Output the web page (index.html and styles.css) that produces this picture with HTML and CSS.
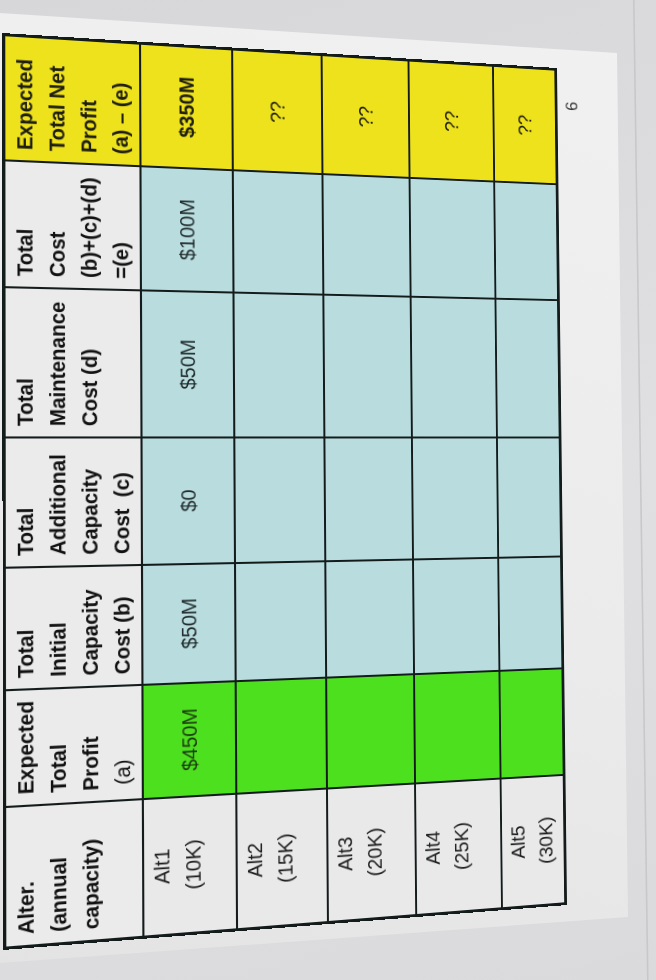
FILE: index.html
```html
<!DOCTYPE html>
<html lang="en">
<head>
<meta charset="utf-8">
<title>Capacity alternatives</title>
<link rel="stylesheet" href="styles.css">
</head>
<body>
<main class="page">
  <div class="sheet-edge"></div>
  <div class="paper"></div>
  <section class="doc">
    <div class="grid">
      <div class="cell head">Alter.<br>(annual<br>capacity)</div>
      <div class="cell head">Expected<br>Total<br>Profit<br><span class="indent">(a)</span></div>
      <div class="cell head">Total<br>Initial<br>Capacity<br>Cost (b)</div>
      <div class="cell head">Total<br>Additional<br>Capacity<br>Cost&nbsp; (c)</div>
      <div class="cell head">Total<br>Maintenance<br>Cost (d)</div>
      <div class="cell head">Total<br>Cost<br>(b)+(c)+(d)<br>=(e)</div>
      <div class="cell head net">Expected<br>Total Net<br>Profit<br>(a) – (e)</div>

      <div class="cell alt">Alt1<br>(10K)</div>
      <div class="cell val profit">$450M</div>
      <div class="cell val cost">$50M</div>
      <div class="cell val cost">$0</div>
      <div class="cell val cost">$50M</div>
      <div class="cell val cost">$100M</div>
      <div class="cell val net strong">$350M</div>

      <div class="cell alt">Alt2<br>(15K)</div>
      <div class="cell val profit"></div>
      <div class="cell val cost"></div>
      <div class="cell val cost"></div>
      <div class="cell val cost"></div>
      <div class="cell val cost"></div>
      <div class="cell val net">??</div>

      <div class="cell alt">Alt3<br>(20K)</div>
      <div class="cell val profit"></div>
      <div class="cell val cost"></div>
      <div class="cell val cost"></div>
      <div class="cell val cost"></div>
      <div class="cell val cost"></div>
      <div class="cell val net">??</div>

      <div class="cell alt">Alt4<br>(25K)</div>
      <div class="cell val profit"></div>
      <div class="cell val cost"></div>
      <div class="cell val cost"></div>
      <div class="cell val cost"></div>
      <div class="cell val cost"></div>
      <div class="cell val net">??</div>

      <div class="cell alt">Alt5<br>(30K)</div>
      <div class="cell val profit"></div>
      <div class="cell val cost"></div>
      <div class="cell val cost"></div>
      <div class="cell val cost"></div>
      <div class="cell val cost"></div>
      <div class="cell val net">??</div>
    </div>
    <div class="pageno">6</div>
  </section>
</main>
</body>
</html>
```

FILE: styles.css
```css
html, body {
  margin: 0;
  padding: 0;
  overflow: hidden;
  background: #dcdcde;
}

body {
  font-family: "Liberation Sans", Arial, sans-serif;
}

.page {
  width: 656px;
  height: 980px;
  display: grid;
  grid-template-columns: 656px;
  grid-template-rows: 980px;
  overflow: hidden;
  background: linear-gradient(165deg, #d7d7d9 0%, #e0e0e2 55%, #dadadc 100%);
}

.page > * {
  grid-area: 1 / 1;
}

.sheet-edge {
  clip-path: polygon(633px 0, 634.6px 0, 648.6px 980px, 647px 980px);
  background: #c8c8cb;
}

.paper {
  clip-path: polygon(0 13px, 617px 53px, 628px 917px, 0 963px);
  background: linear-gradient(200deg, #f1f1f2 0%, #ebebec 55%, #e3e3e4 100%);
}

.doc {
  width: 880px;
  justify-self: start;
  align-self: start;
  transform-origin: 0 0;
  transform: matrix3d(-0.0010956, -1.041373, 0, 0.0000204,
                      1.104679, 0.075321, 0, 0.00017202,
                      0, 0, 1, 0,
                      3, 950, 0, 1);
}

.grid {
  display: grid;
  grid-template-columns: 131px 109px 115px 123px 143px 121px 120px;
  grid-template-rows: 126px 88px 88px 88px 88px 66px;
  gap: 2px;
  border: 3px solid #131b1b;
  background: #131b1b;
}

.cell {
  font-size: 20px;
  line-height: 30px;
  color: #1a1a1a;
  white-space: nowrap;
}

.head {
  font-weight: bold;
  padding: 3px 6px 0 10px;
  background: #ebebeb;
  color: #111;
}

.indent {
  margin-left: 4px;
  font-weight: normal;
}

.alt {
  background: #e9e9ea;
  text-align: center;
  padding-top: 2px;
  color: #1e1e1e;
}

.val {
  display: flex;
  align-items: center;
  justify-content: center;
}

.profit {
  background: #4de01e;
  color: #1d3a12;
}

.cost {
  background: #b9dcde;
  color: #1f2b2c;
}

.net {
  background: #eee21c;
  color: #1d1d10;
}

.strong {
  font-weight: bold;
}

.pageno {
  margin-top: 5px;
  padding-right: 35px;
  text-align: right;
  font-size: 18px;
  line-height: 22px;
  color: #3a3a3a;
}
```
